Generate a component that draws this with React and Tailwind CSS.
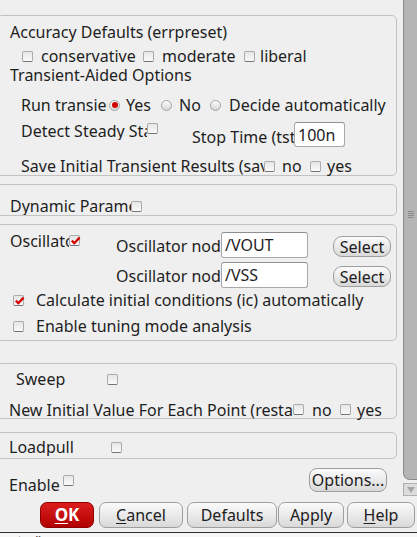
import React from "react";

const Check = ({ checked, className = "" }) => (
  <span
    className={`relative inline-block w-[11px] h-[11px] shrink-0 rounded-[2px] border border-[#ababab] border-b-[#747474] bg-gradient-to-b from-[#e6e6e6] to-[#fafafa] ${className}`}
  >
    {checked && (
      <svg viewBox="0 0 11 11" className="absolute left-[0px] top-[-1px] w-[11px] h-[11px]">
        <path d="M1.8 5.6 L4.3 8.2 L9.6 2.6" stroke="#d40000" strokeWidth="2.3" fill="none" />
      </svg>
    )}
  </span>
);

const Radio = ({ on }) => (
  <span className="inline-flex items-center justify-center w-[11px] h-[11px] shrink-0 rounded-full border border-[#a3a3a3] bg-gradient-to-b from-[#fdfdfd] to-[#d6d6d6]">
    {on && <span className="w-[6px] h-[6px] rounded-full bg-[#d40000]" />}
  </span>
);

const Clip = ({ w, children, className = "" }) => (
  <span className={`block ${w} shrink-0 overflow-hidden whitespace-nowrap ${className}`}>{children}</span>
);

const Group = ({ h, mt, children }) => (
  <div className={`ml-[-3px] w-[400px] ${h} ${mt} shrink-0 rounded-[5px] border border-[#c2c2c2] flex flex-col`}>
    {children}
  </div>
);

const Field = ({ w, h, value }) => (
  <div className={`${w} ${h} shrink-0 rounded-[3px] border border-[#a8a8a8] border-t-[#8e8e8e] bg-white px-[3px] flex items-center`}>
    {value}
  </div>
);

const Btn = ({ w, h = "h-[26px]", className = "", children }) => (
  <button
    className={`${w} ${h} shrink-0 rounded-[7px] border border-[#9e9e9e] bg-gradient-to-b from-[#fbfbfb] to-[#d9d9d9] flex items-center justify-center text-[#202020] ${className}`}
  >
    {children}
  </button>
);

export default function App() {
  return (
    <div
      className="w-[417px] h-[537px] overflow-hidden bg-[#efefef] text-[16px] text-[#1e1e1e] flex flex-col"
      style={{ fontFamily: '"Noto Sans", "DejaVu Sans", sans-serif' }}
    >
      <div className="h-[496px] flex shrink-0">
        {/* main form column */}
        <div className="w-[403px] shrink-0 flex flex-col pt-[15px] leading-[18px]">
          <Group h="h-[161px]" mt="mt-0">
            <div className="mt-[7px] h-[18px] pl-[12px] flex items-center">Accuracy Defaults (errpreset)</div>
            <div className="mt-[6px] h-[18px] pl-[24px] flex items-center">
              <span className="w-[121px] shrink-0 flex items-center">
                <Check />
                <span className="ml-[8px]">conservative</span>
              </span>
              <span className="w-[101px] shrink-0 flex items-center">
                <Check />
                <span className="ml-[8px]">moderate</span>
              </span>
              <span className="flex items-center">
                <Check />
                <span className="ml-[5px]">liberal</span>
              </span>
            </div>
            <div className="mt-[1px] h-[18px] pl-[12px] flex items-center">Transient-Aided Options</div>
            <div className="mt-[12px] h-[18px] pl-[23px] flex items-center">
              <Clip w="w-[87px]">Run transient</Clip>
              <span className="w-[52px] ml-[1px] shrink-0 flex items-center">
                <Radio on />
                <span className="ml-[6px]">Yes</span>
              </span>
              <span className="w-[49px] shrink-0 flex items-center">
                <Radio />
                <span className="ml-[7px]">No</span>
              </span>
              <span className="flex items-center">
                <Radio />
                <span className="ml-[8px]">Decide automatically</span>
              </span>
            </div>
            <div className="mt-[8px] h-[27px] pl-[23px] flex items-start">
              <Clip w="w-[126px]" className="h-[18px]">Detect Steady State</Clip>
              <Check className="mt-[1px]" />
              <Clip w="w-[102px]" className="ml-[34px] mt-[6px] h-[18px]">Stop Time (tstab)</Clip>
              <Field w="w-[51px]" h="h-[25px]" value="100n" />
            </div>
            <div className="mt-[8px] h-[18px] pl-[23px] flex items-center">
              <Clip w="w-[243px]">Save Initial Transient Results (saveinit)</Clip>
              <span className="w-[46px] shrink-0 flex items-center">
                <Check />
                <span className="ml-[7px]">no</span>
              </span>
              <span className="flex items-center">
                <Check />
                <span className="ml-[6px]">yes</span>
              </span>
            </div>
          </Group>

          <Group h="h-[32px]" mt="mt-[8px]">
            <div className="mt-[12px] h-[18px] pl-[12px] flex items-center">
              <Clip w="w-[121px]">Dynamic Parameter</Clip>
              <Check />
            </div>
          </Group>

          <Group h="h-[117px]" mt="mt-[8px]">
            <div className="mt-[7px] h-[26px] pl-[12px] flex items-start">
              <Clip w="w-[59px]" className="h-[18px]">Oscillator</Clip>
              <Check checked className="mt-[3px]" />
              <Clip w="w-[105px]" className="ml-[36px] mt-[5px] h-[18px]">Oscillator node</Clip>
              <Field w="w-[87px]" h="h-[26px]" value="/VOUT" />
              <Btn w="w-[58px]" h="h-[21px]" className="ml-[25px] mt-[4px] rounded-[9px]">Select</Btn>
            </div>
            <div className="mt-[4px] h-[26px] pl-[118px] flex items-start">
              <Clip w="w-[105px]" className="mt-[5px] h-[18px]">Oscillator node</Clip>
              <Field w="w-[87px]" h="h-[26px]" value="/VSS" />
              <Btn w="w-[58px]" h="h-[21px]" className="ml-[25px] mt-[4px] rounded-[9px]">Select</Btn>
            </div>
            <div className="mt-[3px] h-[18px] pl-[15px] flex items-center">
              <Check checked />
              <span className="ml-[12px] whitespace-nowrap">Calculate initial conditions (ic) automatically</span>
            </div>
            <div className="mt-[8px] h-[18px] pl-[15px] flex items-center">
              <Check />
              <span className="ml-[12px] whitespace-nowrap">Enable tuning mode analysis</span>
            </div>
          </Group>

          <Group h="h-[56px]" mt="mt-[22px]">
            <div className="mt-[6px] h-[18px] pl-[18px] flex items-center">
              <Clip w="w-[91px]">Sweep</Clip>
              <Check />
            </div>
            <div className="mt-[13px] h-[17px] pl-[11px] flex items-center">
              <Clip w="w-[284px]">New Initial Value For Each Point (restart)</Clip>
              <span className="w-[47px] shrink-0 flex items-center">
                <Check />
                <span className="ml-[8px]">no</span>
              </span>
              <span className="flex items-center">
                <Check />
                <span className="ml-[6px]">yes</span>
              </span>
            </div>
          </Group>

          <Group h="h-[27px]" mt="mt-[13px]">
            <div className="mt-[5px] h-[18px] pl-[11px] flex items-center">
              <Clip w="w-[102px]">Loadpull</Clip>
              <Check />
            </div>
          </Group>

          <div className="mt-[9px] h-[24px] pl-[9px] flex items-start">
            <Clip w="w-[54px]" className="mt-[8px] h-[18px]">Enable</Clip>
            <Check className="mt-[7px]" />
            <Btn w="w-[78px]" h="h-[24px]" className="ml-[235px] rounded-[8px]">Options...</Btn>
          </div>
        </div>

        {/* scrollbar */}
        <div className="w-[14px] shrink-0 flex flex-col">
          <div className="h-[480px] shrink-0 border-l border-b border-[#8a8a8a] rounded-bl-[7px] bg-[#b5b5b5] flex flex-col items-center">
            <div className="mt-[211px] flex flex-col gap-[1px] ml-[1px]">
              <span className="block w-[6px] h-[1px] bg-[#8a8a8a]" />
              <span className="block w-[6px] h-[1px] bg-[#8a8a8a]" />
              <span className="block w-[6px] h-[1px] bg-[#8a8a8a]" />
              <span className="block w-[6px] h-[1px] bg-[#8a8a8a]" />
            </div>
          </div>
          <div className="mt-[3px] h-[13px] shrink-0 border-l border-t border-b border-[#b0b0b0] bg-[#dcdcdc] flex items-center justify-center">
            <svg viewBox="0 0 8 6" className="w-[8px] h-[6px]">
              <path d="M0 0 L8 0 L4 6 Z" fill="#a6a6a6" />
            </svg>
          </div>
        </div>
      </div>

      {/* button bar */}
      <div className="h-[36px] shrink-0 pt-[6px] flex items-start">
        <button className="ml-[40px] w-[54px] h-[26px] shrink-0 rounded-[7px] border border-[#8c0000] bg-gradient-to-b from-[#dc1c1c] to-[#b10000] text-white font-bold text-[17px] flex items-center justify-center">
          <span className="underline underline-offset-2">O</span>K
        </button>
        <Btn w="w-[84px]" className="ml-[5px]">
          <span className="underline underline-offset-2">C</span>ancel
        </Btn>
        <Btn w="w-[90px]" className="ml-[4px]">Defaults</Btn>
        <Btn w="w-[66px]" className="ml-[1px]">Apply</Btn>
        <Btn w="w-[68px]" className="ml-[3px]">
          <span className="underline underline-offset-2">H</span>elp
        </Btn>
      </div>

      {/* cut-off strip below */}
      <div className="h-[5px] shrink-0 border-t border-[#2e2e2e] bg-[#f7f7f7] overflow-hidden">
        <div className="pl-[4px] mt-[1px] text-[13px] leading-[13px] text-[#333]">est_s()</div>
      </div>
    </div>
  );
}
